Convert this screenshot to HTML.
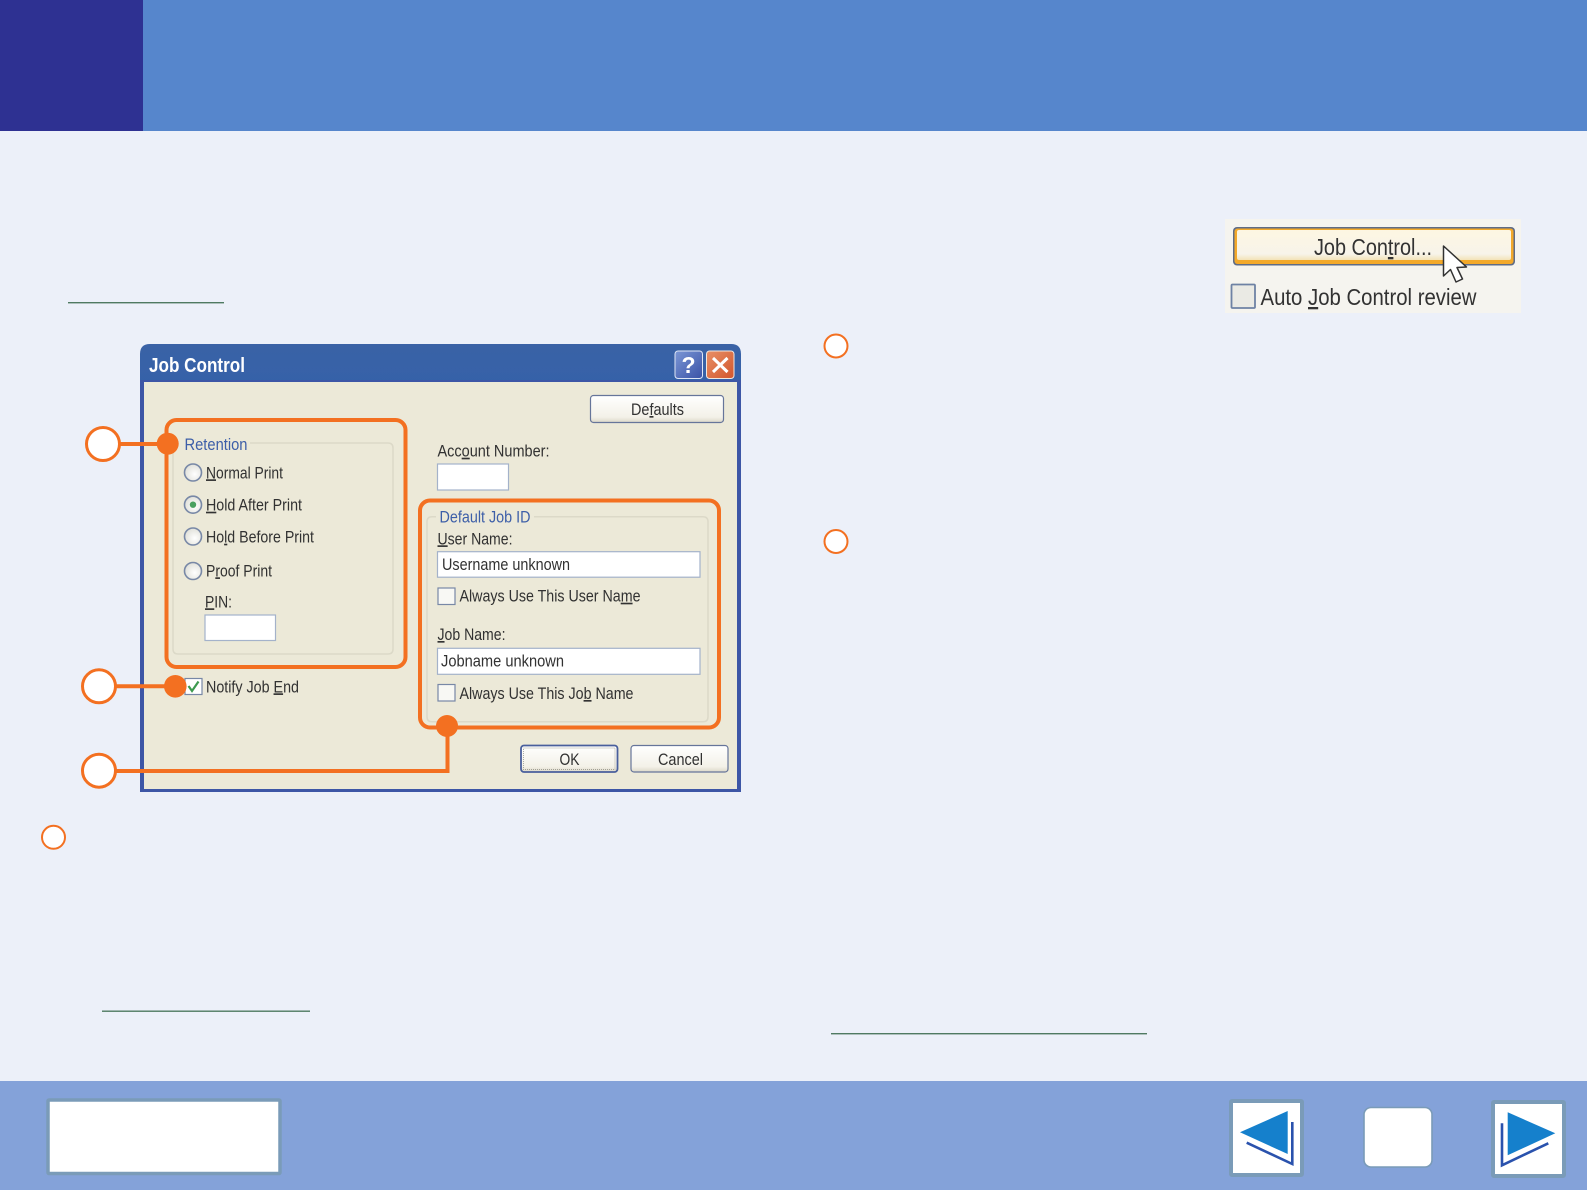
<!DOCTYPE html>
<html><head><meta charset="utf-8"><style>
html,body{margin:0;padding:0;background:#ecf0f9}
svg{display:block}
text{font-family:"Liberation Sans",sans-serif;font-size:16.5px;fill:#303030}
.l{fill:#3d5ea8}
</style></head><body>
<svg width="1587" height="1190" viewBox="0 0 1587 1190" xmlns="http://www.w3.org/2000/svg">
<defs>
<linearGradient id="tb" x1="0" y1="0" x2="0" y2="1"><stop offset="0" stop-color="#3a62a6"/><stop offset=".6" stop-color="#1c5fb6"/><stop offset="1" stop-color="#2060b4"/></linearGradient>
<linearGradient id="btn" x1="0" y1="0" x2="0" y2="1"><stop offset="0" stop-color="#fff"/><stop offset=".8" stop-color="#f3f1e8"/><stop offset="1" stop-color="#dcd8c8"/></linearGradient>
<radialGradient id="rad" cx=".6" cy=".6" r=".7"><stop offset="0" stop-color="#fff"/><stop offset="1" stop-color="#dcdcd4"/></radialGradient>
<linearGradient id="hb" x1="0" y1="0" x2="1" y2="1"><stop offset="0" stop-color="#7b97d6"/><stop offset="1" stop-color="#3a52a6"/></linearGradient>
<linearGradient id="xb" x1="0" y1="0" x2="1" y2="1"><stop offset="0" stop-color="#e89068"/><stop offset="1" stop-color="#d2562c"/></linearGradient>
<linearGradient id="jb" x1="0" y1="0" x2="0" y2="1"><stop offset="0" stop-color="#fdf6e2"/><stop offset=".8" stop-color="#f7f4ea"/><stop offset="1" stop-color="#f3e2b8"/></linearGradient>
<filter id="soft" x="-2%" y="-2%" width="104%" height="104%"><feGaussianBlur stdDeviation=".35"/></filter>
</defs>

<rect width="1587" height="1190" fill="#ecf0f9"/>
<rect width="1587" height="131" fill="#5686cc"/>
<rect width="143" height="131" fill="#2e3192"/>

<rect x="68" y="302" width="156" height="1.4" fill="#4f7a62"/>
<rect x="102" y="1010.5" width="208" height="1.4" fill="#4f7a62"/>
<rect x="831" y="1033" width="316" height="1.4" fill="#4f7a62"/>

<g filter="url(#soft)">
<!-- Dialog -->
<path d="M140 792V354Q140 344 150 344H731Q741 344 741 354V792Z" fill="url(#tb)"/>
<rect x="140" y="380" width="601" height="412" fill="#3c56a6"/>
<rect x="144" y="382" width="593" height="407" fill="#ece9d8"/>
<text x="149" y="372" textLength="96" lengthAdjust="spacingAndGlyphs" style="font-size:20px;font-weight:bold;fill:#fff">Job Control</text>
<rect x="675" y="351" width="27.5" height="27.5" rx="3" fill="url(#hb)" stroke="#dfe6f5" stroke-width="1"/>
<text x="681.5" y="373" style="font-size:23px;font-weight:bold;fill:#fff">?</text>
<rect x="706.5" y="351" width="27.5" height="27.5" rx="3" fill="url(#xb)" stroke="#f0e8e0" stroke-width="1"/>
<path d="M713 358L727.500 372M727.500 358L713 372" stroke="#fff" stroke-width="3" fill="none"/>

<rect x="590.500" y="395.500" width="133" height="27" rx="3" fill="url(#btn)" stroke="#66749a" stroke-width="1.2"/>
<text x="631" y="415" textLength="53" lengthAdjust="spacingAndGlyphs">De<tspan text-decoration="underline">f</tspan>aults</text>

<!-- Retention group -->
<path d="M250 443H388Q393 443 393 448V649Q393 654 388 654H178Q173 654 173 649V448" fill="none" stroke="#dcd9c8" stroke-width="1.5"/>
<text class="l" x="184.500" y="450" textLength="63" lengthAdjust="spacingAndGlyphs">Retention</text>

<g stroke="#7888a6" stroke-width="1.6" fill="url(#rad)">
<circle cx="193" cy="472.500" r="8.500"/><circle cx="193" cy="504.700" r="8.500"/><circle cx="193" cy="536.500" r="8.500"/><circle cx="193" cy="571" r="8.500"/>
</g>
<circle cx="193" cy="504.700" r="3.200" fill="#4aa05e"/>
<text x="206" y="478.300" textLength="77" lengthAdjust="spacingAndGlyphs"><tspan text-decoration="underline">N</tspan>ormal Print</text>
<text x="206" y="510.700" textLength="96" lengthAdjust="spacingAndGlyphs"><tspan text-decoration="underline">H</tspan>old After Print</text>
<text x="206" y="542.700" textLength="108" lengthAdjust="spacingAndGlyphs">Ho<tspan text-decoration="underline">l</tspan>d Before Print</text>
<text x="206" y="576.300" textLength="66" lengthAdjust="spacingAndGlyphs">P<tspan text-decoration="underline">r</tspan>oof Print</text>
<text x="205" y="607.300" textLength="27" lengthAdjust="spacingAndGlyphs"><tspan text-decoration="underline">P</tspan>IN:</text>
<rect x="205" y="615" width="70.500" height="25.500" fill="#fff" stroke="#a4b2ca" stroke-width="1.2"/>

<rect x="185" y="678.500" width="17" height="16" fill="#fff" stroke="#7888a6" stroke-width="1.2"/>
<path d="M188.500 686L192 691L198.500 681.500" fill="none" stroke="#3d9a50" stroke-width="2.200"/>
<text x="206" y="692.300" textLength="93" lengthAdjust="spacingAndGlyphs">Notify Job <tspan text-decoration="underline">E</tspan>nd</text>

<!-- Account -->
<text x="437.500" y="456.700" textLength="112" lengthAdjust="spacingAndGlyphs">Acc<tspan text-decoration="underline">o</tspan>unt Number:</text>
<rect x="437.500" y="464" width="71" height="26" fill="#fff" stroke="#a4b2ca" stroke-width="1.2"/>

<!-- Default Job ID -->
<path d="M534 516.700H703Q708 516.700 708 521.700V716.700Q708 721.700 703 721.700H432Q427 721.700 427 716.700V521.700Q427 516.700 432 516.700H436" fill="none" stroke="#dcd9c8" stroke-width="1.5"/>
<text class="l" x="439.500" y="522.700" textLength="91" lengthAdjust="spacingAndGlyphs">Default Job ID</text>
<text x="437.500" y="544.300" textLength="75" lengthAdjust="spacingAndGlyphs"><tspan text-decoration="underline">U</tspan>ser Name:</text>
<rect x="437.500" y="551.700" width="262.500" height="25.500" fill="#fff" stroke="#a4b2ca" stroke-width="1.2"/>
<text x="442" y="570" textLength="128" lengthAdjust="spacingAndGlyphs">Username unknown</text>
<rect x="438" y="588" width="17" height="16.500" fill="#f8f8f4" stroke="#7888a6" stroke-width="1.2"/>
<text x="459.500" y="601.700" textLength="181" lengthAdjust="spacingAndGlyphs">Always Use This User Na<tspan text-decoration="underline">m</tspan>e</text>
<text x="437.500" y="640" textLength="68" lengthAdjust="spacingAndGlyphs"><tspan text-decoration="underline">J</tspan>ob Name:</text>
<rect x="437.500" y="648.300" width="262.500" height="26" fill="#fff" stroke="#a4b2ca" stroke-width="1.2"/>
<text x="441" y="666.700" textLength="123" lengthAdjust="spacingAndGlyphs">Jobname unknown</text>
<rect x="438" y="684.500" width="17" height="16.500" fill="#f8f8f4" stroke="#7888a6" stroke-width="1.2"/>
<text x="459.500" y="699" textLength="174" lengthAdjust="spacingAndGlyphs">Always Use This Jo<tspan text-decoration="underline">b</tspan> Name</text>

<!-- OK / Cancel -->
<rect x="521" y="745.500" width="96.500" height="26.500" rx="3" fill="url(#btn)" stroke="#4a5f9c" stroke-width="1.800"/>
<rect x="523.500" y="748" width="91.500" height="21.500" fill="none" stroke="#8a8a80" stroke-width=".7" stroke-dasharray="1 1"/>
<text x="559.500" y="765" textLength="20" lengthAdjust="spacingAndGlyphs">OK</text>
<rect x="631" y="745.500" width="97" height="26.500" rx="3" fill="url(#btn)" stroke="#66749a" stroke-width="1.200"/>
<text x="658" y="765" textLength="45" lengthAdjust="spacingAndGlyphs">Cancel</text>

<!-- Job Control image -->
<rect x="1225" y="219" width="296" height="94" fill="#f5f4ef"/>
<rect x="1233" y="227" width="282" height="38.500" rx="4" fill="#5f6c86"/>
<rect x="1234.500" y="228.500" width="279" height="35.500" rx="3" fill="#f3a92c"/>
<rect x="1237" y="230" width="274" height="30" rx="2" fill="url(#jb)"/>
<text x="1314" y="255" textLength="118" lengthAdjust="spacingAndGlyphs" style="font-size:23px">Job Con<tspan text-decoration="underline">t</tspan>rol...</text>
<rect x="1231.500" y="284.500" width="23.500" height="23.500" rx="1" fill="#eaeae4" stroke="#6e82a4" stroke-width="1.800"/>
<text x="1260.500" y="305" textLength="216" lengthAdjust="spacingAndGlyphs" style="font-size:23px">Auto <tspan text-decoration="underline">J</tspan>ob Control review</text>
<path d="M1443.500 246V276L1450.500 269.500L1456 282L1462.500 279L1457 267.500L1466.500 267Z" fill="#fff" stroke="#333" stroke-width="1.500" stroke-linejoin="round"/>
</g>

<!-- Orange annotations -->
<g fill="none" stroke="#f37021" stroke-width="4">
<rect x="166.500" y="420" width="239" height="247" rx="10"/>
<rect x="420" y="500.500" width="299" height="227" rx="10"/>
<path d="M120 444H167"/><path d="M116 686.300H175"/><path d="M116 771H447.500V726"/>
</g>
<g fill="#f37021"><circle cx="167.700" cy="443.700" r="11"/><circle cx="175.300" cy="686.300" r="11.300"/><circle cx="447" cy="726" r="11"/></g>
<g fill="#fff" stroke="#f37021" stroke-width="3">
<circle cx="103" cy="444" r="16.500"/><circle cx="99" cy="686.300" r="16.500"/><circle cx="99" cy="770.700" r="16.500"/>
</g>
<g fill="#fff" stroke="#f37021" stroke-width="2">
<circle cx="836" cy="346" r="11.500"/><circle cx="836" cy="541.500" r="11.500"/><circle cx="53.500" cy="837.300" r="11.500"/>
</g>

<!-- Footer -->
<rect y="1081" width="1587" height="109" fill="#84a2d9"/>
<rect x="48" y="1100" width="232" height="73.500" rx="1" fill="#fff" stroke="#7a9bb8" stroke-width="3.500"/>
<rect x="1231" y="1101" width="71" height="74" rx="1" fill="#fff" stroke="#7a9bb8" stroke-width="4"/>
<path d="M1240 1132.300L1287.700 1111V1154Z" fill="#1580cc"/>
<path d="M1292.300 1122V1164L1246.700 1142.700" fill="none" stroke="#2a52ad" stroke-width="2.600"/>
<rect x="1364" y="1107.500" width="68" height="59.500" rx="7" fill="#fff" stroke="#7a9bb8" stroke-width="1.600"/>
<rect x="1493" y="1102" width="71" height="74" rx="1" fill="#fff" stroke="#7a9bb8" stroke-width="4"/>
<path d="M1507.700 1112.300L1555.300 1133.300L1507.700 1155.300Z" fill="#1580cc"/>
<path d="M1502 1123.300V1165.300L1548.300 1143.300" fill="none" stroke="#2a52ad" stroke-width="2.600"/>
</svg>
</body></html>
